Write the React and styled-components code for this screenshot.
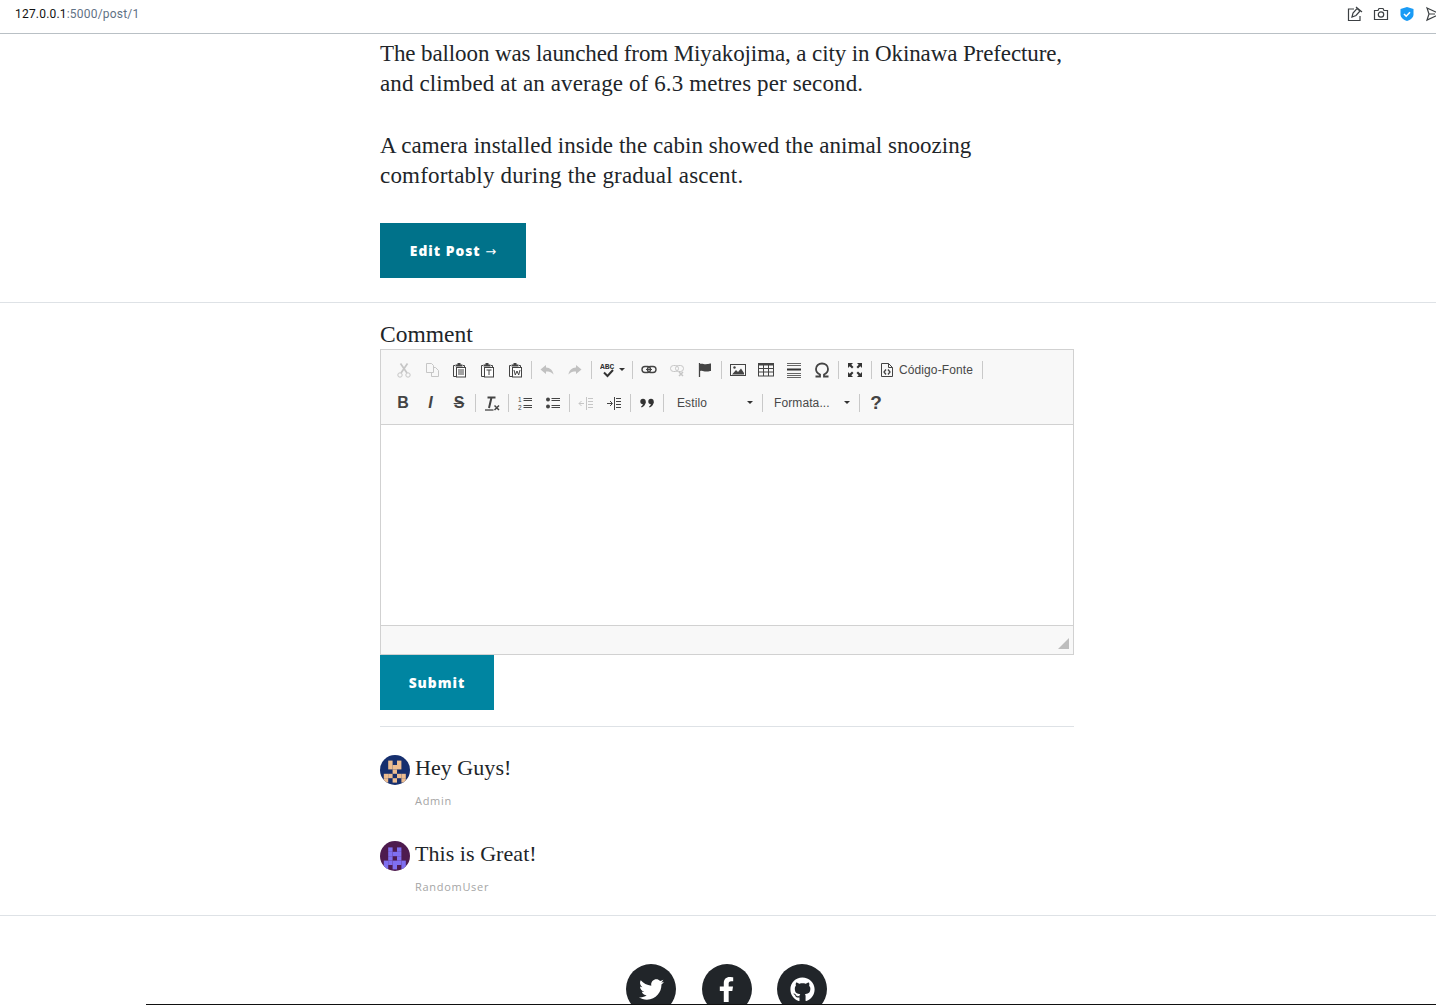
import React from "react";
import styled, { createGlobalStyle } from "styled-components";
import { FaTwitter, FaFacebookF, FaGithub } from "react-icons/fa";

const Global = createGlobalStyle`
  html, body { margin: 0; padding: 0; background: #fff; overflow: hidden; }
  body { font-family: "Liberation Serif", serif; color: #212529; }
`;

const Page = styled.div`
  height: 1005px;
  overflow: hidden;
  position: relative;
`;

const UrlBar = styled.header`
  height: 34px;
  box-sizing: border-box;
  border-bottom: 1px solid #b9c0c5;
  display: flex;
  align-items: center;
  justify-content: space-between;
  padding: 0 0 5px 15px;
  overflow: hidden;
`;

const Url = styled.div`
  font: 12px "Roboto", sans-serif;
  letter-spacing: 0.2px;
  color: #111;
  span { color: #5f7285; }
`;

const BarIcons = styled.div`
  display: flex;
  width: 94px;
  margin-right: -5px;
  gap: 10px;
  flex: none;
  svg { flex: none; }
`;

const Column = styled.div`
  width: 694px;
  margin-left: 380px;
`;

const Para = styled.p`
  margin: 0 0 32px;
  font-size: 23px;
  line-height: 30px;
  color: #212529;
`;

const Line = styled.span`
  display: block;
  letter-spacing: ${(p) => p.$ls}px;
  white-space: nowrap;
`;

const Article = styled(Column)`
  padding-top: 5px;
`;

const Button = styled.button`
  display: block;
  height: 55px;
  width: ${(p) => p.$w}px;
  border: 0;
  border-radius: 0;
  padding: 0;
  color: #fff;
  background: ${(p) => p.$bg};
  font: 800 13.8px "Open Sans", sans-serif;
  letter-spacing: 1px;
  text-align: center;
`;

const Arrow = styled.span`
  font: 400 13px "DejaVu Sans", sans-serif;
  letter-spacing: 0;
`;

const Rule = styled.hr`
  margin: ${(p) => p.$margin};
  border: 0;
  border-top: 1px solid #dee2e6;
`;

const Label = styled.label`
  display: block;
  font-size: 23.5px;
  line-height: 30px;
  color: #212529;
`;

const Editor = styled.div`
  border: 1px solid #d1d1d1;
  height: 306px;
  box-sizing: border-box;
  display: flex;
  flex-direction: column;
`;

const Toolbar = styled.div`
  height: 75px;
  background: #f8f8f8;
  border-bottom: 1px solid #d1d1d1;
  box-sizing: border-box;
  padding: 3px 0 0 9px;
`;

const ToolRow = styled.div`
  height: 33px;
  display: flex;
  align-items: center;
`;

const Tool = styled.span`
  width: ${(p) => p.$w || 28}px;
  height: 28px;
  flex: none;
  display: flex;
  align-items: center;
  justify-content: center;
  opacity: ${(p) => (p.$off ? 0.3 : 1)};
  svg { display: block; }
`;

const Sep = styled.i`
  width: 1px;
  height: 18px;
  background: #c9c9c9;
  flex: none;
  margin: ${(p) => p.$m || "0 2px"};
`;

const TextTool = styled.span`
  font: 12px "Liberation Sans", sans-serif;
  color: #484848;
  letter-spacing: 0.1px;
  flex: none;
  white-space: nowrap;
  padding: ${(p) => p.$pad || 0};
`;

const Combo = styled.span`
  width: ${(p) => p.$w}px;
  display: flex;
  align-items: center;
  justify-content: space-between;
  flex: none;
  box-sizing: border-box;
  padding: ${(p) => p.$pad};
`;

const Caret = styled.b`
  width: 0;
  height: 0;
  border-left: 3px solid transparent;
  border-right: 3px solid transparent;
  border-top: 3px solid #333;
  flex: none;
  margin-left: ${(p) => p.$gap || 0}px;
`;

const EditArea = styled.div`
  flex: 1;
  background: #fff;
`;

const EditorFoot = styled.div`
  height: 29px;
  background: #f8f8f8;
  border-top: 1px solid #d1d1d1;
  box-sizing: border-box;
  display: flex;
  justify-content: flex-end;
  align-items: flex-end;
  padding: 0 4px 5px 0;
`;

const Grip = styled.div`
  width: 0;
  height: 0;
  border-left: 11px solid transparent;
  border-bottom: 11px solid #bdbdbd;
`;

const Comment = styled.div`
  display: grid;
  grid-template-columns: 30px 1fr;
  column-gap: 5px;
  height: 86px;
`;

const Avatar = styled.svg`
  width: 30px;
  height: 30px;
  border-radius: 50%;
  display: block;
`;

const CommentText = styled.div`
  font-size: 22px;
  letter-spacing: 0.05px;
  line-height: 26px;
  color: #212529;
`;

const CommentAuthor = styled.div`
  font: 11px "Open Sans", sans-serif;
  letter-spacing: 0.7px;
  color: #a5a5a5;
  margin-top: 12px;
  line-height: 16px;
`;

const Social = styled.div`
  display: flex;
  justify-content: center;
  gap: 25.5px;
  padding: 48px 1px 0 0;
`;

const Round = styled.a`
  width: 50px;
  height: 50px;
  border-radius: 50%;
  background: #212529;
  color: #fff;
  display: flex;
  align-items: center;
  justify-content: center;
  font-size: 25px;
  flex: none;
`;

const ClipLine = styled.div`
  position: absolute;
  left: 146px;
  right: 0;
  bottom: 0;
  height: 1px;
  background: #111;
`;

const GlyphText = styled.span`
  font: ${(p) => (p.$italic ? "italic " : "")}700 ${(p) => p.$size || 16}px "Liberation Sans", sans-serif;
  color: #444;
  text-decoration: ${(p) => (p.$strike ? "line-through" : "none")};
  line-height: 16px;
  margin-right: ${(p) => p.$nudge || 0}px;
`;

// toolbar drawings, all on a 16 grid
const G = ({ children, c = "#444" }) => (
  <svg width="16" height="16" viewBox="0 0 16 16" fill="none" stroke={c} strokeWidth="1">
    {children}
  </svg>
);

const Clip = ({ children }) => (
  <G>
    <path d="M3 3.5H1.5v11H4M11 3.500h1.500V5" />
    <path d="M5.500 1h3v1.500h2v2h-7v-2h2z" fill="#444" stroke="none" />
    <rect x="4.500" y="5.500" width="9" height="9.500" fill="#fff" />
    {children}
  </G>
);

const smallText = { fontFamily: "Liberation Sans, sans-serif", fontSize: 6.5, fill: "#444", stroke: "none" };

const icons = {
  cut: (
    <G c="#555">
      <circle cx="4" cy="13" r="2.2" />
      <circle cx="12" cy="13" r="2.2" />
      <path d="M5 11 11.5 1.5M11 11 4.5 1.5" strokeWidth="1.7" />
    </G>
  ),
  copy: (
    <G c="#555">
      <path d="M2.5 1.5h5l2 2v7h-7zM9.500 5.500h2l3 3v6h-7v-4" />
    </G>
  ),
  paste: (
    <Clip>
      <path d="M6 8h6M6 10h6M6 12h6" />
    </Clip>
  ),
  pasteText: (
    <Clip>
      <path d="M6.500 8h5M9 8v5" />
    </Clip>
  ),
  pasteWord: (
    <Clip>
      <path d="M6 8l1.300 5 1.700-4 1.700 4L12 8" />
    </Clip>
  ),
  undo: (
    <G>
      <path d="M7 3 1.500 7.500 7 12V9.500c3 0 5.500.5 7.500 3C14 8.500 11 5.500 7 5.500z" fill="#444" stroke="none" />
    </G>
  ),
  redo: (
    <G>
      <path d="M9 3l5.500 4.500L9 12V9.500c-3 0-5.500.5-7.500 3C2 8.500 5 5.500 9 5.500z" fill="#444" stroke="none" />
    </G>
  ),
  link: (
    <G>
      <rect x="1" y="4.500" width="8.500" height="6" rx="3" strokeWidth="1.4" />
      <rect x="6.500" y="4.500" width="8.500" height="6" rx="3" strokeWidth="1.4" />
      <path d="M5 7.500h6" />
    </G>
  ),
  unlink: (
    <G c="#555">
      <rect x="1.500" y="3.500" width="8" height="6" rx="3" />
      <rect x="6.500" y="3.500" width="8" height="6" rx="3" />
      <path d="M10 10l4 4M14 10l-4 4" strokeWidth="1.5" />
    </G>
  ),
  anchor: (
    <G>
      <path d="M2.500 1v14" strokeWidth="1.3" />
      <path d="M3 2c3-1 4 1 7 0 1.500 0 3-.5 4-.5V9c-1 0-2.500.5-4 .5-3 .5-4-1.500-7-.5z" fill="#444" stroke="none" />
    </G>
  ),
  image: (
    <G>
      <rect x=".5" y="2.500" width="15" height="11" />
      <circle cx="4.500" cy="5.500" r="1.200" fill="#444" stroke="none" />
      <path d="M2 12.500 6 8l2 2 3-3.500 3 4.500v1.500z" fill="#444" stroke="none" />
    </G>
  ),
  table: (
    <G>
      <rect x=".5" y="1.500" width="15" height="12.500" />
      <path d="M.5 2.500h15" strokeWidth="2" />
      <path d="M.5 6.500h15M.5 10h15M5.500 3v11M10.500 3v11" />
    </G>
  ),
  hr: (
    <G c="#666">
      <path d="M1 1.500h14M1 3.500h14M1 11.500h14M1 13.500h14M1 15.500h14" />
      <path d="M1 7.500h14" stroke="#333" strokeWidth="2" />
    </G>
  ),
  omega: (
    <G>
      <path
        d="M1.500 14.500H6v-2C3.500 11.500 2 9.500 2 7c0-3.300 2.700-5.500 6-5.500s6 2.200 6 5.500c0 2.500-1.500 4.500-4 5.500v2h4.500"
        strokeWidth="1.8"
      />
    </G>
  ),
  maximize: (
    <G c="#333">
      <path
        d="M1 1h5L4.300 2.700 6.500 5 5 6.500 2.700 4.300 1 6zM15 1v5l-1.700-1.700L11 6.500 9.500 5l2.200-2.300L10 1zM1 15v-5l1.700 1.700L5 9.500 6.500 11l-2.200 2.300L6 15zM15 15h-5l1.700-1.700L9.500 11 11 9.500l2.300 2.200L15 10z"
        fill="#333"
        stroke="none"
      />
    </G>
  ),
  source: (
    <G>
      <path d="M2.500 1.500h7l4 4v9h-11zM9.500 1.500v4h4" />
      <path d="M7 7.500 5 10l2 2.500M9 7.500l2 2.500-2 2.500" strokeWidth="1.3" />
    </G>
  ),
  spell: (
    <svg width="18" height="16" viewBox="0 0 18 16" fill="none" stroke="#333">
      <text x="0" y="7" fontSize="8" fontFamily="Liberation Mono, monospace" fill="#333" stroke="none" fontWeight="700">
        ABC
      </text>
      <path d="M4 10.500l3.500 3.500L13 8" strokeWidth="2" />
    </svg>
  ),
  ol: (
    <G>
      <path d="M6.500 3.500H15M6.500 5.500H15M6.500 10.500H15M6.500 12.500H15" />
      <text x="1" y="7" style={smallText}>1</text>
      <text x="1" y="15" style={smallText}>2</text>
    </G>
  ),
  ul: (
    <G>
      <path d="M6.500 3.500H15M6.500 5.500H15M6.500 10.500H15M6.500 12.500H15" />
      <circle cx="3" cy="4.500" r="2" fill="#444" stroke="none" />
      <circle cx="3" cy="11.500" r="2" fill="#444" stroke="none" />
    </G>
  ),
  outdent: (
    <G c="#555">
      <path d="M8.500 2v13M10 3.500h5M10 6.500h5M10 9.500h5M10 12.500h5M1 8.500h5M3.500 6 1 8.500 3.500 11" />
    </G>
  ),
  indent: (
    <G>
      <path d="M8.500 2v13M10 3.500h5M10 6.500h5M10 9.500h5M10 12.500h5M1 8.500h5M4 6l2.500 2.500L4 11" />
    </G>
  ),
  quote: (
    <G c="#333">
      <circle cx="4" cy="6.500" r="2.700" fill="#333" stroke="none" />
      <circle cx="12" cy="6.500" r="2.700" fill="#333" stroke="none" />
      <path d="M6.700 6.500c0 3-1.500 5-4 6l-.7-1c1.200-.7 2-1.700 2-3zM14.700 6.500c0 3-1.500 5-4 6l-.7-1c1.200-.7 2-1.700 2-3z" fill="#333" stroke="none" />
    </G>
  ),
  clear: (
    <G>
      <path d="M1 15h8.500" strokeWidth="1.3" />
      <path d="M3.500 2.500h8M7.500 2.500 5 13" strokeWidth="2" />
      <path d="M10.500 10.500l4.500 4.500M15 10.500 10.500 15" strokeWidth="1.5" />
    </G>
  ),
};

const Avatars = {
  admin: { bg: "#162f6e", fg: "#edbd90", top: 5.6, rows: [".X.X.", ".XXX.", "..X..", "XX.XX", "X.X.X"] },
  random: { bg: "#4e1b4e", fg: "#7f6ff0", top: 6.4, rows: [".X.X.", ".XXX.", ".X.X.", "XXXXX", "X.X.X"] },
};

const Identicon = ({ kind }) => {
  const a = Avatars[kind];
  return (
    <Avatar viewBox="0 0 30 30">
      <rect width="30" height="30" fill={a.bg} />
      {a.rows.map((row, y) =>
        row.split("").map((cell, x) =>
          cell === "X" ? (
            <rect key={`${x}-${y}`} x={3.8 + x * 4.4} y={a.top + y * 4.4} width="4.4" height="4.4" fill={a.fg} />
          ) : null
        )
      )}
    </Avatar>
  );
};

export default function App() {
  return (
    <Page>
      <Global />
      <UrlBar>
        <Url>
          127.0.0.1<span>:5000/post/1</span>
        </Url>
        <BarIcons>
          <svg width="16" height="16" viewBox="0 0 16 16" fill="none" stroke="#3c4043" strokeWidth="1.2">
            <path d="M7 3H1.500v11.500H13V10" />
            <path d="M5 11l1-4 4-4.500 3 2.500-4 4.500zM9 1l6 5" />
          </svg>
          <svg width="16" height="16" viewBox="0 0 16 16" fill="none" stroke="#3c4043" strokeWidth="1.2">
            <path d="M1.500 4.500H5l1-2h4l1 2h3.500v9h-13z" />
            <circle cx="8" cy="8.500" r="2.700" />
          </svg>
          <svg width="16" height="16" viewBox="0 0 16 16">
            <path d="M8 1l6.500 2v5.500c0 3-3 5.500-6.500 6.500C4.500 14 1.500 11.500 1.500 8.500V3z" fill="#1a9bf5" />
            <path d="M5 8l2.200 2.200L11 6.300" fill="none" stroke="#fff" strokeWidth="1.6" />
          </svg>
          <svg width="16" height="16" viewBox="0 0 16 16" fill="none" stroke="#3c4043" strokeWidth="1.2">
            <path d="M2 2l13 6-13 6 2-6zM4 8h6" />
          </svg>
        </BarIcons>
      </UrlBar>

      <Article>
        <Para>
          <Line $ls={-0.11}>The balloon was launched from Miyakojima, a city in Okinawa Prefecture,</Line>
          <Line $ls={0.12}>and climbed at an average of 6.3 metres per second.</Line>
        </Para>
        <Para>
          <Line $ls={0.05}>A camera installed inside the cabin showed the animal snoozing</Line>
          <Line $ls={0.2}>comfortably during the gradual ascent.</Line>
        </Para>
        <Button $w={146} $bg="#00728a">
          Edit Post <Arrow>→</Arrow>
        </Button>
      </Article>

      <Rule $margin="24px 0 16px" />

      <Column>
        <Label>Comment</Label>
        <Editor>
          <Toolbar>
            <ToolRow>
              <Tool $off={1}>{icons.cut}</Tool>
              <Tool $off={1}>{icons.copy}</Tool>
              <Tool>{icons.paste}</Tool>
              <Tool>{icons.pasteText}</Tool>
              <Tool>{icons.pasteWord}</Tool>
              <Sep $m="0 1px 0 1px" />
              <Tool $off={1}>{icons.undo}</Tool>
              <Tool $off={1}>{icons.redo}</Tool>
              <Sep />
              <Tool $w={36}>
                {icons.spell}
                <Caret $gap={1} />
              </Tool>
              <Sep />
              <Tool>{icons.link}</Tool>
              <Tool $off={1}>{icons.unlink}</Tool>
              <Tool>{icons.anchor}</Tool>
              <Sep />
              <Tool>{icons.image}</Tool>
              <Tool>{icons.table}</Tool>
              <Tool>{icons.hr}</Tool>
              <Tool>{icons.omega}</Tool>
              <Sep />
              <Tool>{icons.maximize}</Tool>
              <Sep />
              <Tool $w={25}>{icons.source}</Tool>
              <TextTool $pad="0 7px 0 0">Código-Fonte</TextTool>
              <Sep />
            </ToolRow>
            <ToolRow>
              <Tool><GlyphText $nudge={2}>B</GlyphText></Tool>
              <Tool><GlyphText $italic $nudge={3}>I</GlyphText></Tool>
              <Tool><GlyphText $strike $nudge={2}>S</GlyphText></Tool>
              <Sep $m="0 2px 0 1px" />
              <Tool>{icons.clear}</Tool>
              <Sep />
              <Tool>{icons.ol}</Tool>
              <Tool>{icons.ul}</Tool>
              <Sep />
              <Tool $off={1}>{icons.outdent}</Tool>
              <Tool>{icons.indent}</Tool>
              <Sep />
              <Tool>{icons.quote}</Tool>
              <Sep />
              <Combo $w={94} $pad="0 7px 0 11px">
                <TextTool>Estilo</TextTool>
                <Caret />
              </Combo>
              <Sep />
              <Combo $w={92} $pad="0 7px 0 9px">
                <TextTool>Formata...</TextTool>
                <Caret />
              </Combo>
              <Sep />
              <Tool>
                <GlyphText $size={19}>?</GlyphText>
              </Tool>
            </ToolRow>
          </Toolbar>
          <EditArea />
          <EditorFoot>
            <Grip />
          </EditorFoot>
        </Editor>
        <Button $w={114} $bg="#0085a1">Submit</Button>
        <Rule $margin="16px 0 28px" />
        <Comment>
          <Identicon kind="admin" />
          <div>
            <CommentText>Hey Guys!</CommentText>
            <CommentAuthor>Admin</CommentAuthor>
          </div>
        </Comment>
        <Comment>
          <Identicon kind="random" />
          <div>
            <CommentText>This is Great!</CommentText>
            <CommentAuthor>RandomUser</CommentAuthor>
          </div>
        </Comment>
      </Column>

      <Rule $margin="-12px 0 0" />

      <Column>
        <Social>
          <Round><FaTwitter /></Round>
          <Round><FaFacebookF /></Round>
          <Round><FaGithub /></Round>
        </Social>
      </Column>
      <ClipLine />
    </Page>
  );
}
